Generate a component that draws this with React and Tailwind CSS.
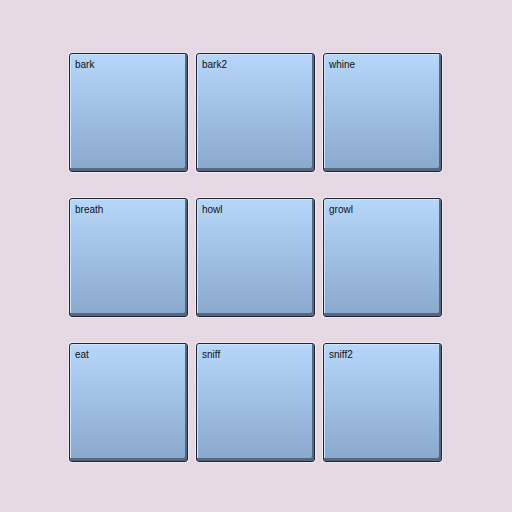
const pads = ["bark", "bark2", "whine", "breath", "howl", "growl", "eat", "sniff", "sniff2"];

function Pad({ label }) {
  return (
    <button
      type="button"
      className="h-[119px] w-[119px] rounded-[3px] border border-[#1e2530] bg-gradient-to-b from-[#b6d7fa] to-[#89a8cc] px-[5px] pt-[5px] text-left align-top shadow-[inset_-2px_-3px_0_#56687f,inset_1px_1px_0_#cfe5fb,0_0_0_1px_#f3eaf0]"
    >
      <span className="block text-[10px] leading-[12px] text-[#111] [font-family:'Liberation_Sans',Arial,sans-serif]">
        {label}
      </span>
      <span className="block h-full" />
    </button>
  );
}

export default function App() {
  return (
    <div className="min-h-[512px] w-[512px] bg-[#e6d8e2] pl-[69px] pt-[53px]">
      <div className="grid grid-cols-[119px_119px_119px] gap-x-[8px] gap-y-[26px]">
        {pads.map((p) => (
          <div key={p} className="flex">
            <Pad label={p} />
          </div>
        ))}
      </div>
    </div>
  );
}
